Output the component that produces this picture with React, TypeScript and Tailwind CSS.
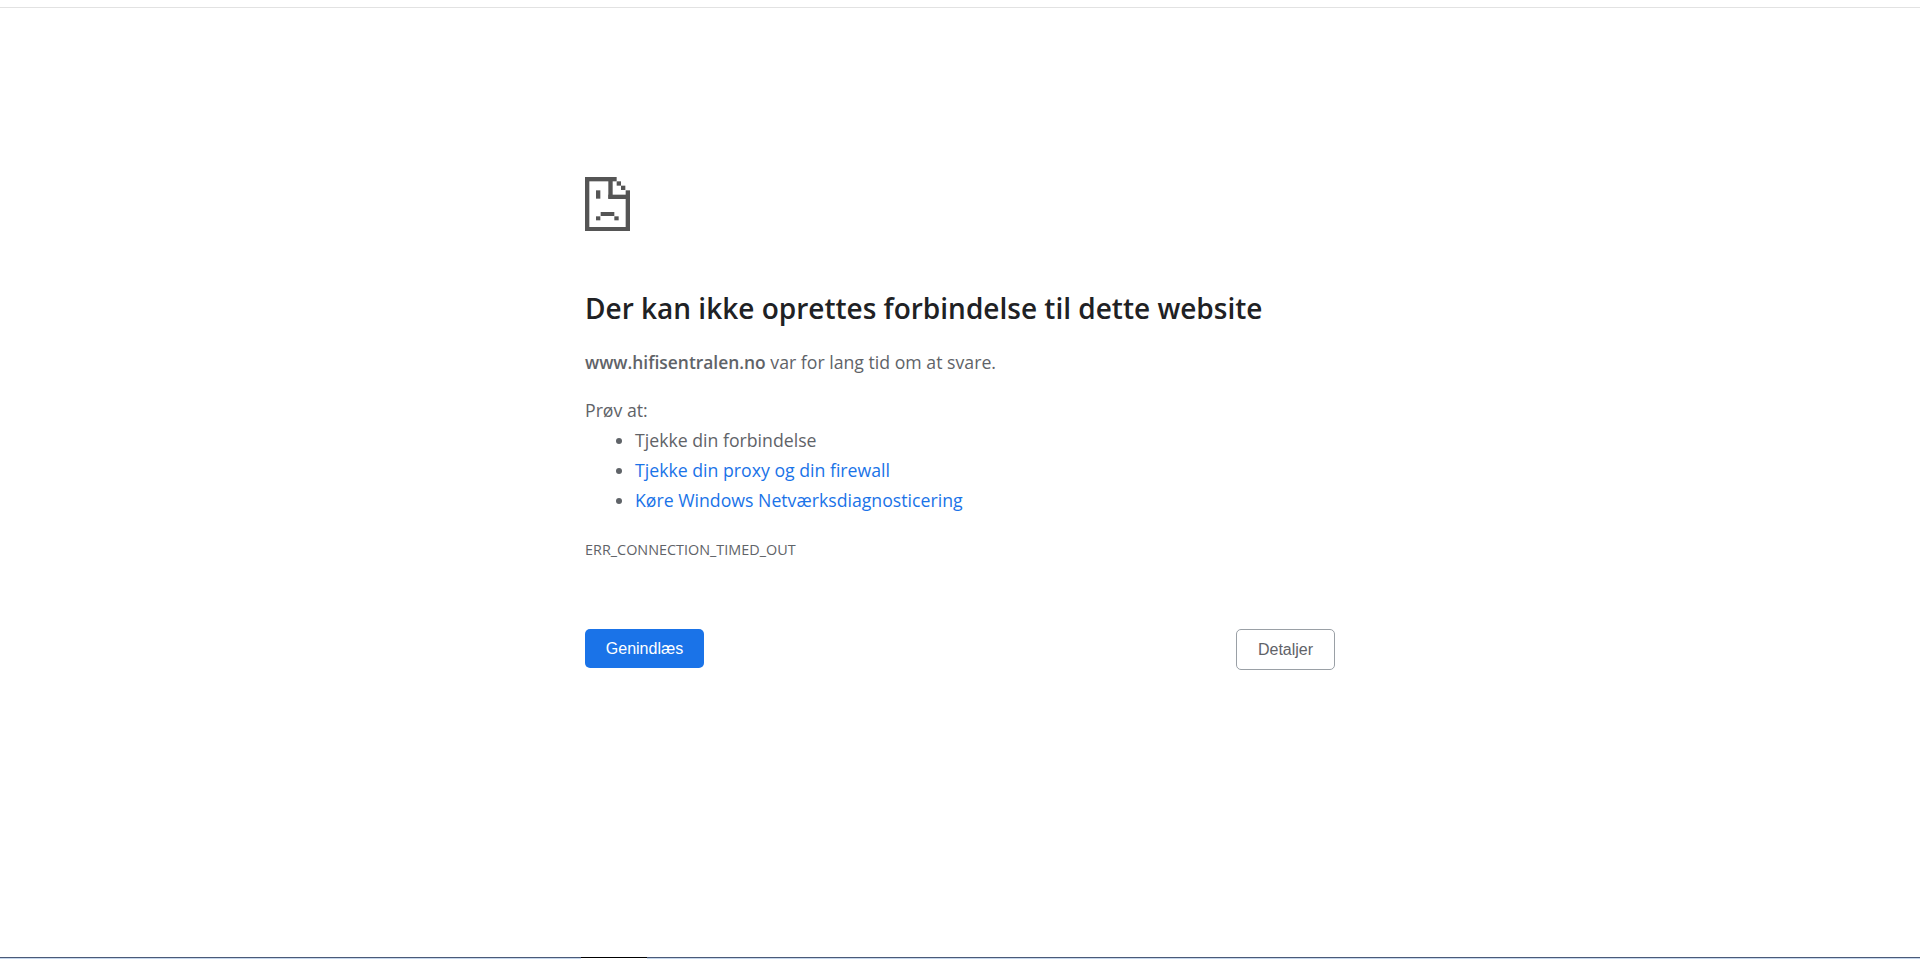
const SadPage = () => (
  <svg width="45" height="54" viewBox="0 0 135 162" className="block" fill="#555555">
    <rect x="0" y="0" width="13" height="162" />
    <rect x="0" y="0" width="95" height="13" />
    <rect x="70" y="0" width="13" height="65" />
    <rect x="70" y="53" width="65" height="13" />
    <rect x="122" y="40" width="13" height="122" />
    <rect x="0" y="150" width="135" height="12" />
    <rect x="95" y="13" width="13" height="13" />
    <rect x="108" y="26" width="13" height="13" />
    <rect x="33" y="40" width="13" height="25" />
    <rect x="47" y="105" width="41" height="12" />
    <rect x="33" y="118" width="13" height="12" />
    <rect x="88" y="118" width="13" height="12" />
  </svg>
);

export default function App() {
  return (
    <div className="h-[959px] overflow-hidden flex flex-col bg-white font-['Open_Sans','Noto_Sans',sans-serif]">
      <div className="mt-[7px] h-px bg-[#e2e2e2] shrink-0" />
      <main className="flex-1 w-[750px] mx-auto pt-[169px] text-[17.7px] text-[#5f6368]">
        <SadPage />
        <h1 className="mt-[57px] text-[28px] leading-[40px] font-semibold text-[#202124]">
          Der kan ikke oprettes forbindelse til dette website
        </h1>
        <p className="mt-[21px] leading-[26px]">
          <strong className="font-semibold text-[17.4px]">www.hifisentralen.no</strong> var for lang tid om at svare.
        </p>
        <p className="mt-[22px] leading-[26px]">Prøv at:</p>
        <ul className="list-disc pl-[50px] leading-[30px] mt-[2px]">
          <li>Tjekke din forbindelse</li>
          <li className="text-[#1a73e8] marker:text-[#5f6368]">Tjekke din proxy og din firewall</li>
          <li className="text-[#1a73e8] marker:text-[#5f6368]">Køre Windows Netværksdiagnosticering</li>
        </ul>
        <div className="mt-[25px] text-[14.4px] leading-[20px]">ERR_CONNECTION_TIMED_OUT</div>
        <div className="mt-[69px] flex items-start justify-between font-['Liberation_Sans',sans-serif]">
          <button className="w-[119px] h-[39px] rounded-[5px] bg-[#1a73e8] text-white text-[16px]">
            Genindlæs
          </button>
          <button className="w-[99px] h-[41px] rounded-[5px] border border-[#9aa0a6] bg-white text-[#5f6368] text-[16px]">
            Detaljer
          </button>
        </div>
      </main>
      <div className="h-[2px] shrink-0 flex">
        <div className="w-[581px] flex flex-col">
          <div className="h-px bg-[#4a5a78]" />
          <div className="h-px bg-[#c5d6ec]" />
        </div>
        <div className="w-[66px]">
          <div className="h-px bg-black" />
        </div>
        <div className="flex-1 flex flex-col">
          <div className="h-px bg-[#4a5a78]" />
          <div className="h-px bg-[#c5d6ec]" />
        </div>
      </div>
    </div>
  );
}
